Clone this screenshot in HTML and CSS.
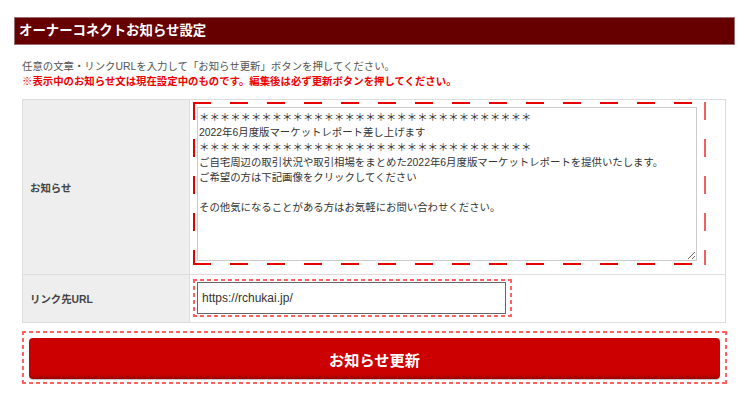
FILE: index.html
```html
<!DOCTYPE html>
<html lang="ja">
<head>
  <meta charset="UTF-8" />
  <title>オーナーコネクトお知らせ設定</title>
  <link rel="stylesheet" href="styles.css">
</head>
<body>
  <div class="page">
    <h1 class="page-title">オーナーコネクトお知らせ設定</h1>

    <div class="content">
      <p class="lead">任意の文章・リンクURLを入力して「お知らせ更新」ボタンを押してください。</p>
      <p class="lead warn">※表示中のお知らせ文は現在設定中のものです。編集後は必ず更新ボタンを押してください。</p>

      <table class="form-table">
        <tr class="row-notice">
          <th>お知らせ</th>
          <td>
            <div class="long-dash">
              <textarea class="notice-text">＊＊＊＊＊＊＊＊＊＊＊＊＊＊＊＊＊＊＊＊＊＊＊＊＊＊＊＊＊＊＊＊
2022年6月度版マーケットレポート差し上げます
＊＊＊＊＊＊＊＊＊＊＊＊＊＊＊＊＊＊＊＊＊＊＊＊＊＊＊＊＊＊＊＊
ご自宅周辺の取引状況や取引相場をまとめた2022年6月度版マーケットレポートを提供いたします。
ご希望の方は下記画像をクリックしてください

その他気になることがある方はお気軽にお問い合わせください。</textarea>
            </div>
          </td>
        </tr>
        <tr class="row-url">
          <th>リンク先URL</th>
          <td>
            <div class="short-dash url-wrap">
              <input type="text" class="url-input" value="https://rchukai.jp/" />
            </div>
          </td>
        </tr>
      </table>

      <div class="short-dash submit-wrap">
        <button class="submit">お知らせ更新</button>
      </div>
    </div>
  </div>
</body>
</html>
```

FILE: styles.css
```css
* {
  box-sizing: border-box;
  margin: 0;
  padding: 0;
}

body {
  font-family: 'Liberation Sans', 'Noto Sans CJK JP', sans-serif;
  background: #fff;
  color: #333;
  padding: 17px 11px 0 14px;
}

.page-title {
  background-color: #660000;
  border: 1px solid #9a7070;
  color: #fff;
  font-size: 13.4px;
  font-weight: bold;
  height: 28px;
  line-height: 26px;
  padding-left: 4px;
}

.content {
  padding: 14px 8px 0 8px;
}

.lead {
  font-size: 10.4px;
  line-height: 15px;
  color: #555;
}

.warn {
  color: #ee0000;
  font-weight: bold;
}

.form-table {
  width: 704px;
  margin-top: 10px;
  border-collapse: collapse;
  border: 1px solid #ddd;
}

.form-table th,
.form-table td {
  border: 1px solid #ddd;
  vertical-align: middle;
}

.form-table th {
  width: 167px;
  background-color: #eee;
  color: #444;
  font-size: 10.4px;
  font-weight: bold;
  text-align: left;
  padding-left: 7px;
}

.row-notice td {
  padding: 2px 3px 9px 3px;
}

.row-url td {
  padding: 4px 3px 5px 3px;
}

/* long dashed frame around textarea */
.long-dash {
  width: 513px;
  height: 163px;
  padding: 5px 9px 4px 4px;
  background:
    repeating-linear-gradient(to right, #e60000 0 18px, transparent 18px 37px) left top / 100% 2px no-repeat,
    repeating-linear-gradient(to right, #e60000 0 18px, transparent 18px 37px) left bottom / 100% 2px no-repeat,
    repeating-linear-gradient(to bottom, #e60000 0 18px, transparent 18px 37px) left top / 2px 100% no-repeat,
    repeating-linear-gradient(to bottom, #f06060 0 18px, transparent 18px 37px) right top / 2px 100% no-repeat;
}

.notice-text {
  display: block;
  width: 500px;
  height: 154px;
  border: 1px solid #ccc;
  padding: 2px 1px;
  font-family: 'Liberation Sans', 'Noto Sans CJK JP', sans-serif;
  font-size: 10.4px;
  line-height: 15px;
  color: #333;
  resize: vertical;
  overflow: hidden;
}

/* small dashed frame, drawn with gradients to get short dashes */
.short-dash {
  padding: 2px;
  background:
    repeating-linear-gradient(to right, #ff6060 0 4px, transparent 4px 7px) left top / 100% 2px no-repeat,
    repeating-linear-gradient(to right, #ff6060 0 4px, transparent 4px 7px) left bottom / 100% 2px no-repeat,
    repeating-linear-gradient(to bottom, #ff6060 0 4px, transparent 4px 7px) left top / 2px 100% no-repeat,
    repeating-linear-gradient(to bottom, #ff6060 0 4px, transparent 4px 7px) right top / 2px 100% no-repeat;
}

.url-wrap {
  width: 319px;
  padding: 3px 6px 3px 4px;
}

.url-input {
  display: block;
  width: 309px;
  height: 32px;
  border: 1px solid #666;
  padding: 0 4px;
  font-family: 'Liberation Sans', sans-serif;
  font-size: 12px;
  color: #333;
}

.submit-wrap {
  width: 705px;
  margin-top: 8px;
  padding: 7px 7px 5px 7px;
}

.submit {
  display: block;
  width: 691px;
  height: 41px;
  border: none;
  border-radius: 4px;
  background: linear-gradient(to bottom, #cc0000 0, #cc0000 36px, #990000 41px);
  box-shadow: 0 1px 1px rgba(0, 0, 0, 0.25);
  color: #fff;
  font-family: 'Liberation Sans', 'Noto Sans CJK JP', sans-serif;
  font-size: 15.2px;
  font-weight: bold;
  cursor: pointer;
}
```
